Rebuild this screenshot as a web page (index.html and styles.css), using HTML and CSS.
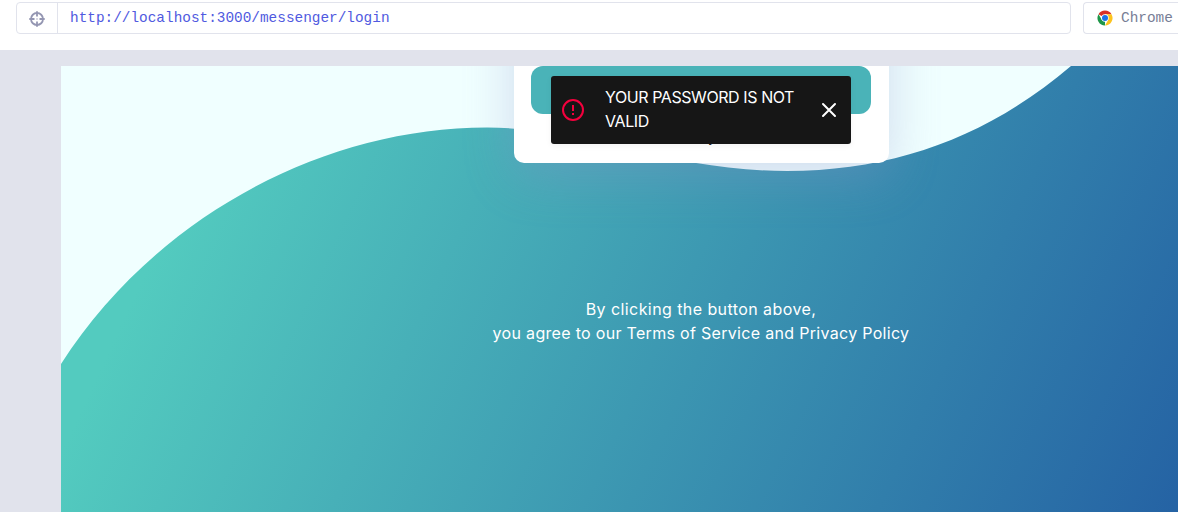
FILE: index.html
```html
<!DOCTYPE html>
<html lang="en">
<head>
<meta charset="utf-8">
<title>Login</title>
<link rel="stylesheet" href="styles.css">
</head>
<body>
<header class="toolbar">
  <div class="address">
    <span class="target">
      <svg width="16" height="16" viewBox="0 0 16 16" fill="none" stroke="#9496b2" stroke-width="1.8"><circle cx="8" cy="8" r="6"/><path d="M8 .3v5.2M8 10.5v5.2M.3 8h5.2M10.500 8h5.200"/><path d="M7.300 8h1.400" stroke-width="1.200"/></svg>
    </span>
    <span class="url">http://localhost:3000/messenger/login</span>
  </div>
  <div class="browser">
    <svg width="16" height="16" viewBox="0 0 16 16"><path d="M8 8L1.500 4.250A7.500 7.500 0 0 1 14.500 4.250L8 4.300Z" fill="#d93025"/><path d="M8 8L8 15.500A7.500 7.500 0 0 1 1.500 4.250L4.800 9.800Z" fill="#1e9648"/><path d="M11.250 9.870L8 15.500A7.500 7.500 0 0 0 14.500 4.250H8Z" fill="#fcc31e"/><circle cx="8" cy="8" r="3.700" fill="#fff"/><circle cx="8" cy="8" r="3" fill="#1a73e8"/></svg>
    <span>Chrome</span>
  </div>
</header>
<main class="stage">
  <section class="page">
    <svg class="wave" width="1117" height="446" viewBox="61 66 1117 446">
      <defs><linearGradient id="sea" gradientUnits="userSpaceOnUse" x1="223" y1="104" x2="1160" y2="539"><stop offset="0" stop-color="#53cbbf"/><stop offset="1" stop-color="#2563a4"/></linearGradient></defs>
      <path fill="url(#sea)" d="M61 364C153 220 320 127.500 487 127.500C585 127.500 670 171 787 171C897 171 990 135 1071 66H1178V512H61Z"/>
    </svg>
    <div class="card"><div class="submit"></div><span class="link">y</span></div>
    <div class="toast" role="alert">
      <svg class="alert" width="24" height="24" viewBox="0 0 24 24" fill="none" stroke="#f4003d" stroke-width="2"><circle cx="12" cy="12" r="10"/><path d="M12 7v6M12 15v2"/></svg>
      <p class="message">YOUR PASSWORD IS NOT<br>VALID</p>
      <svg class="close" width="16" height="16" viewBox="0 0 16 16" stroke="#fff" stroke-width="2" stroke-linecap="round"><path d="M2 2l12 12M14 2L2 14"/></svg>
    </div>
    <p class="terms"><span class="first">By clicking the button above,</span><br><span class="second">you agree to our Terms of Service and Privacy Policy</span></p>
  </section>
</main>
</body>
</html>
```
FILE: styles.css
```css
* { box-sizing: border-box; }
body { margin: 0; height: 512px; overflow: hidden; background: #fff; font-family: Inter, sans-serif; }
p { margin: 0; }
.toolbar { display: flex; gap: 12px; height: 50px; padding: 2px 0 16px 16px; font: 14.4px "Liberation Mono", monospace; }
.address { display: flex; flex: none; width: 1055px; height: 32px; border: 1px solid #e1e3ec; border-radius: 4px; }
.target { display: flex; align-items: center; justify-content: center; width: 41px; padding-top: 2px; border-right: 1px solid #e1e3ec; }
.url { padding-left: 12px; line-height: 31px; color: #505ae0; }
.browser { display: flex; flex: 1; align-items: center; gap: 8px; min-width: 0; height: 32px; padding-left: 13px; border: 1px solid #e1e3ec; border-right: 0; border-radius: 4px 0 0 4px; color: #777d96; }
.stage { height: 462px; padding: 16px 0 0 61px; background: #e1e3ec; }
.page { position: relative; height: 446px; overflow: hidden; background: #f0ffff; }
.wave { display: block; }
.card { position: absolute; left: 453px; top: -300px; width: 375px; height: 397px; padding: 300px 18px 0 17px; border-radius: 10px; background: #fff; box-shadow: 0 13px 50px rgba(140, 142, 200, .33); }
.submit { height: 48px; border-radius: 12px; background: #4ab3b8; }
.link { display: block; padding: 13px 0 0 177px; font-size: 14px; line-height: 20px; color: #222; }
.toast { position: absolute; left: 490px; top: 10px; display: flex; align-items: center; width: 300px; height: 68px; padding: 0 14px 0 10px; border-radius: 3px; background: #161616; box-shadow: 0 2px 6px rgba(0, 0, 0, .05); color: #fff; }
.message { flex: 1; padding: 0 0 2px 20px; font-size: 16px; line-height: 24px; white-space: nowrap; letter-spacing: -.42px; }
.terms { display: flex; flex-direction: column; align-items: center; position: absolute; left: 432px; top: 231px; width: 416px; color: #fff; font-size: 16px; line-height: 24px; white-space: nowrap; }
.terms br { display: none; }
.first { letter-spacing: .42px; }
.second { letter-spacing: .31px; }
```
